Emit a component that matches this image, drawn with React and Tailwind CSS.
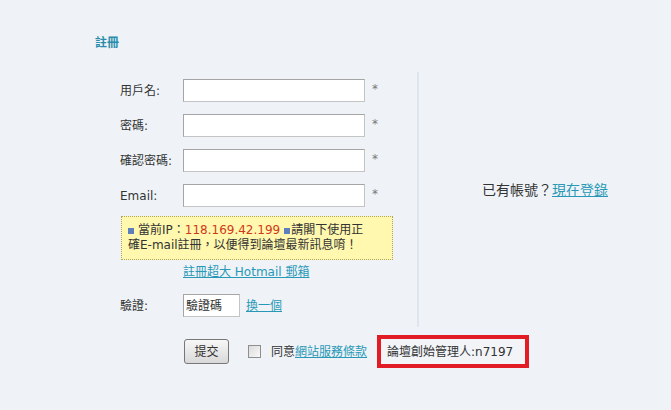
export default function App() {
  const rows = ["用戶名:", "密碼:", "確認密碼:", "Email:"];
  return (
    <div className="w-[671px] h-[410px] overflow-hidden bg-[#eff3f8] text-[#333] text-[12px] font-['DejaVu_Sans','Noto_Sans_CJK_TC',sans-serif]">
      <div className="pt-[37px] pl-[95px] leading-[13px] font-bold text-[#2a8cab]">註冊</div>

      <div className="mt-[22px] flex h-[255px]">
        <div className="w-[417px] pl-[120px] pt-[7px] flex flex-col">
          {rows.map((label, i) => (
            <div key={label} className={"flex items-start h-[23px] " + (i > 0 ? "mt-[12px]" : "")}>
              <div className="w-[63px] h-[23px] flex items-center leading-[14px] whitespace-nowrap">{label}</div>
              <input
                readOnly
                type={i === 1 || i === 2 ? "password" : "text"}
                className="w-[182px] h-[23px] bg-white border border-[#a5a5a5] border-b-[#c4c4c4] border-r-[#c4c4c4] outline-none"
              />
              <span className="ml-[7px] mt-[4px] leading-[12px] text-[#777]">*</span>
            </div>
          ))}

          <div className="mt-[9px] ml-[1px] w-[272px] border border-dotted border-[#aca460] bg-[#fff8ae] px-[6px] pt-[6px] pb-[6px] leading-[15px] whitespace-nowrap">
            <div className="flex items-center">
              <span className="inline-block w-[6px] h-[6px] bg-[#5d80bd] mr-[4px]"></span>
              <span>當前IP：</span>
              <span className="text-[#d0381a]">118.169.42.199</span>
              <span className="inline-block w-[6px] h-[6px] bg-[#5d80bd] ml-[4px] mr-[1px]"></span>
              <span>請閣下使用正</span>
            </div>
            <div>確E-mail註冊，以便得到論壇最新訊息唷！</div>
          </div>

          <div className="mt-[4px] ml-[63px] leading-[16px]">
            <span className="text-[#2898b6] underline">註冊超大 Hotmail 郵箱</span>
          </div>

          <div className="mt-[14px] flex items-center h-[23px]">
            <div className="w-[63px] leading-[14px]">驗證:</div>
            <div className="w-[57px] h-[23px] bg-white border border-[#a5a5a5] border-b-[#c4c4c4] border-r-[#c4c4c4] flex items-center pl-[2px] leading-[14px]">驗證碼</div>
            <span className="ml-[6px] text-[#2898b6] underline leading-[14px]">換一個</span>
          </div>
        </div>

        <div className="w-[2px] h-full bg-[#dfe5ee]"></div>

        <div className="flex-1 flex items-center justify-center pb-[20px] text-[14px] leading-[16px] text-[#333]">
          <span>已有帳號？</span>
          <span className="text-[#2898b6] underline">現在登錄</span>
        </div>
      </div>

      <div className="mt-[8px] flex items-center h-[33px] pl-[184px]">
        <button className="w-[45px] h-[25px] rounded-[3px] border border-[#777] bg-gradient-to-b from-[#f7f7f7] to-[#d9d9d9] text-[12px] leading-[14px] text-[#333]">提交</button>
        <div className="ml-[19px] w-[13px] h-[13px] border border-[#8e8e8e] bg-gradient-to-br from-[#dcdcdc] to-[#f8f8f8]"></div>
        <span className="ml-[10px] leading-[14px]">同意</span>
        <span className="text-[#2898b6] underline leading-[14px]">網站服務條款</span>
        <div className="ml-[10px] w-[152px] h-[33px] border-[4px] border-[#e21c24] bg-[#f2f4f8] flex items-center px-[6px] leading-[14px] whitespace-nowrap">
          論壇創始管理人:n7197
        </div>
      </div>
    </div>
  );
}
